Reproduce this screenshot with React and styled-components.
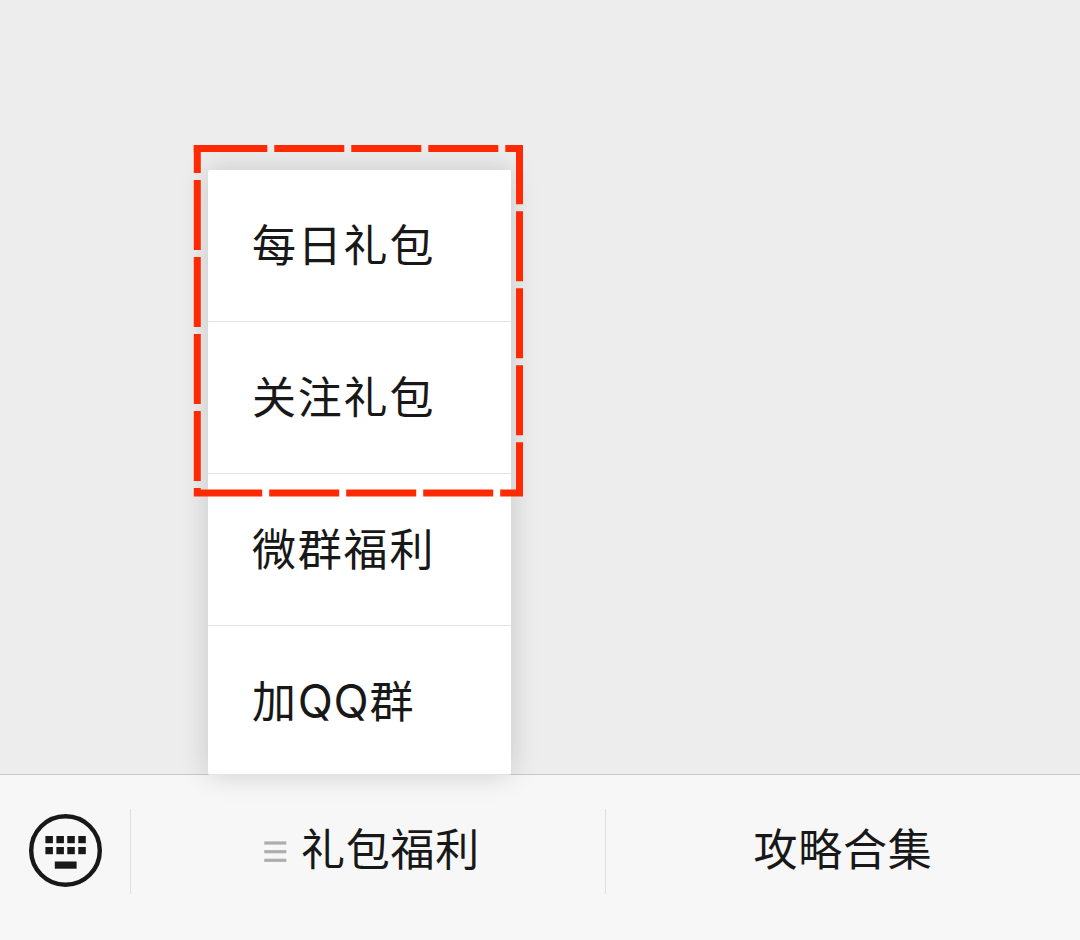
import styled, { createGlobalStyle } from "styled-components";

const menuItems = [
  { label: "每日礼包" },
  { label: "关注礼包" },
  { label: "微群福利" },
  { label: <>加<Latin>QQ</Latin>群</> },
];

function Latin({ children }) {
  return <LatinText>{children}</LatinText>;
}

function KeyboardIcon() {
  const cols = [45.4, 56.4, 67.3, 78.3];
  return (
    <svg width="74" height="74" viewBox="29 814 74 74">
      <circle cx="65.5" cy="850.5" r="34.3" fill="none" stroke="#181818" strokeWidth="4.4" />
      {cols.map((x) => (
        <g key={x} fill="#181818">
          <rect x={x} y="836" width="7.5" height="7.2" />
          <rect x={x} y="847" width="7.5" height="7.2" />
        </g>
      ))}
      <rect x="54.8" y="861.5" width="21.8" height="7.2" fill="#181818" />
    </svg>
  );
}

function ListIcon() {
  return (
    <ListSvg width="23" height="22" viewBox="0 0 23 22" fill="#adadad">
      <rect x="0.3" y="0.4" width="22" height="3.2" />
      <rect x="0.3" y="9.1" width="22" height="3.2" />
      <rect x="0.3" y="17.7" width="22" height="3.2" />
    </ListSvg>
  );
}

function HighlightFrame() {
  return (
    <Highlight width="330" height="352" viewBox="193 145 330 352">
      <path
        d="M197.3 148.5H519.5V493H197.3Z"
        fill="none"
        stroke="#ff2a04"
        strokeWidth="7"
        strokeDasharray="70 7"
      />
      <rect x="193.8" y="145" width="7" height="7" fill="#ff2a04" />
    </Highlight>
  );
}

export default function App() {
  return (
    <Page>
      <GlobalStyle />
      <Chat>
        <Menu>
          {menuItems.map((item, i) => (
            <MenuItem key={i}>
              <span>{item.label}</span>
            </MenuItem>
          ))}
          <HighlightFrame />
        </Menu>
      </Chat>
      <Bar>
        <KeyboardButton aria-label="键盘">
          <KeyboardIcon />
        </KeyboardButton>
        <Tab>
          <ListIcon />
          <TabLabel>礼包福利</TabLabel>
        </Tab>
        <Tab>
          <TabLabel>攻略合集</TabLabel>
        </Tab>
      </Bar>
    </Page>
  );
}

const GlobalStyle = createGlobalStyle`
  * {
    box-sizing: border-box;
  }
  body {
    margin: 0;
    background: #ededed;
  }
`

const Page = styled.div`
  display: flex;
  flex-direction: column;
  width: 1080px;
  height: 940px;
  overflow: hidden;
  background: #ededed;
  color: #181818;
  font-family: "Noto Sans CJK SC", sans-serif;
`

const Chat = styled.main`
  flex: 1;
  display: flex;
  align-items: flex-end;
  padding-left: 208px;
`

const Menu = styled.div`
  position: relative;
  width: 303px;
  margin-bottom: -1px;
  background: #fff;
  border-bottom: 1px solid #e4e4e4;
  border-radius: 2px;
  box-shadow: 0 0 28px rgba(0, 0, 0, 0.17);
`

const MenuItem = styled.div`
  display: flex;
  align-items: center;
  height: 152px;
  padding: 0 0 5px 44px;
  border-bottom: 1px solid #e3e3e3;
  font-size: 44px;
  letter-spacing: 1.8px;
  line-height: 64px;

  &:nth-child(4) {
    height: 148px;
    padding-bottom: 2px;
    border-bottom: none;
  }
`

const LatinText = styled.span`
  font-family: Inter, sans-serif;
  font-size: 46px;
  font-weight: 400;
  letter-spacing: 0.6px;
  line-height: 1;
`

const Highlight = styled.svg`
  position: absolute;
  left: -15px;
  top: -25px;
`

const Bar = styled.nav`
  display: flex;
  height: 166px;
  padding-top: 34px;
  border-top: 1px solid #c8c8c8;
  background: #f7f7f7;
`

const KeyboardButton = styled.button`
  display: flex;
  align-items: center;
  justify-content: center;
  width: 130px;
  height: 83px;
  padding: 0 0 0 1px;
  border: none;
  background: none;
`

const Tab = styled.div`
  flex: 1 1 0;
  display: flex;
  align-items: center;
  justify-content: center;
  height: 85px;
  border-left: 1px solid #dedede;
`

const ListSvg = styled.svg`
  margin: 0 14px 0 8px;
`

const TabLabel = styled.span`
  padding-bottom: 9px;
  font-size: 44px;
  letter-spacing: 0.8px;
  line-height: 64px;
`
